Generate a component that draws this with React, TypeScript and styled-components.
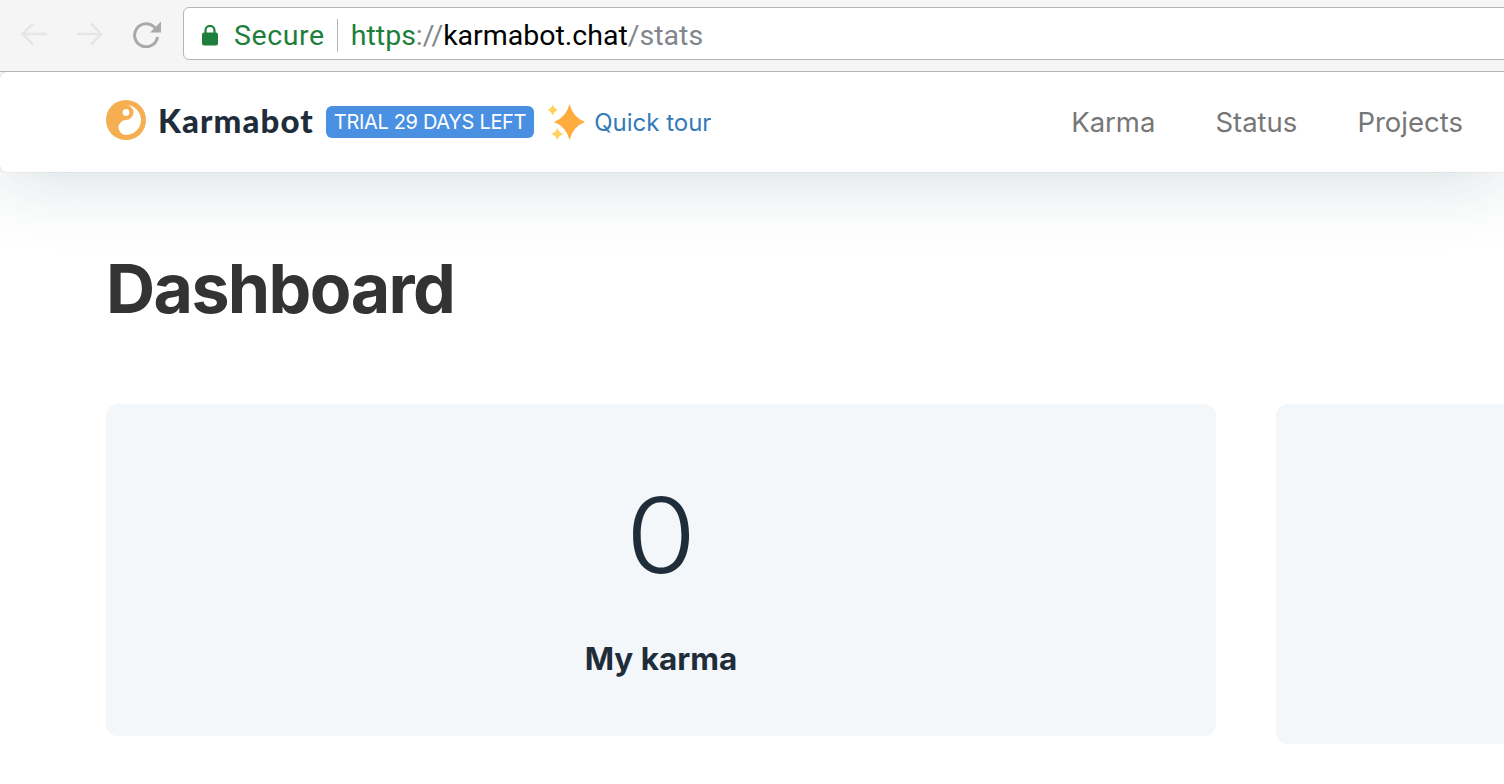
import React from "react"
import styled, { createGlobalStyle } from "styled-components"

const GlobalStyle = createGlobalStyle`
  html, body {
    margin: 0;
    padding: 0;
    background: #fff;
    overflow: hidden;
  }
  body {
    width: 1504px;
    height: 784px;
    font-family: "Inter", "Liberation Sans", sans-serif;
  }
`

const Page = styled.div`
  width: 1504px;
  height: 784px;
  overflow: hidden;
`

const BrowserBar = styled.div`
  height: 71px;
  box-sizing: border-box;
  padding: 7px 0 11px 21px;
  background: #f5f5f5;
  display: flex;
  align-items: center;
  position: relative;
  z-index: 2;
`

const NavArrows = styled.div`
  display: flex;
  align-items: center;
  gap: 30px;
  margin-right: 22px;
`

const AddressBox = styled.div`
  flex: 1;
  height: 100%;
  box-sizing: border-box;
  margin-right: -8px;
  padding: 3px 0 0 18px;
  display: flex;
  align-items: center;
  background: #fff;
  border: 1px solid #b5b5b5;
  border-radius: 6px;
  font-family: "Roboto", sans-serif;
  font-size: 28.5px;
`

const SecureLabel = styled.span`
  margin-left: 16px;
  padding-right: 12px;
  color: #1e7e3c;
  border-right: 1px solid #b5b5b5;
  line-height: 33px;
  letter-spacing: 0.6px;
`

const UrlPart = styled.span<{ $tone: "green" | "gray" | "black" }>`
  color: ${(p) =>
    p.$tone === "green" ? "#1e7e3c" : p.$tone === "gray" ? "#80868b" : "#000"};
`

const Url = styled.div`
  margin-left: 13px;
`

const BrowserEdge = styled.div`
  height: 1px;
  background: #b5b5b5;
  margin-bottom: -1px;
  position: relative;
  z-index: 3;
`

const Navbar = styled.header`
  height: 100px;
  margin-top: 1px;
  box-sizing: border-box;
  padding: 0 41px 0 106px;
  display: flex;
  align-items: center;
  justify-content: space-between;
  position: relative;
  background: #fff;
  border-radius: 6px 0 0 6px;
  box-shadow: 0 0 1px rgba(0, 0, 0, 0.35), 0 12px 70px rgba(30, 60, 80, 0.16);
`

const Brand = styled.div`
  display: flex;
  align-items: center;
`

const Logo = styled.svg`
  margin-bottom: 4px;
`

const BrandName = styled.span`
  margin: 0 0 4px 12px;
  font-family: "Lato", sans-serif;
  font-weight: 900;
  font-size: 33px;
  letter-spacing: 1.1px;
  color: #1f2d3a;
`

const TrialBadge = styled.span`
  margin-left: 12px;
  height: 32px;
  padding: 0 8px;
  display: inline-flex;
  align-items: center;
  background: #4a90e2;
  border-radius: 6px;
  color: #fff;
  font-size: 20px;
  letter-spacing: -0.33px;
  white-space: nowrap;
`

const Sparkle = styled.svg`
  margin-left: 12px;
`

const TourLink = styled.a`
  margin-left: 8px;
  color: #337ab7;
  font-size: 24px;
`

const NavLinks = styled.nav`
  display: flex;
  gap: 60px;
`

const NavLink = styled.a`
  color: #777;
  font-size: 27.5px;
`

const Main = styled.main`
  padding: 0 0 0 106px;
`

const Title = styled.h1`
  margin: 74px 0 0;
  font-weight: 700;
  font-size: 68px;
  line-height: 84px;
  letter-spacing: -1.6px;
  color: #333;
`

const CardRow = styled.div`
  margin-top: 74px;
  display: flex;
  align-items: flex-start;
  gap: 60px;
`

const Card = styled.section<{ $height: number }>`
  flex: 0 0 1110px;
  height: ${(p) => p.$height}px;
  background: #f3f7fa;
  border-radius: 12px;
  display: flex;
  flex-direction: column;
  align-items: center;
`

const Value = styled.div`
  margin-top: 69px;
  font-weight: 300;
  font-size: 104px;
  line-height: 124px;
  color: #1f2d3a;
  transform: scaleX(1.1);
`

const CardLabel = styled.div`
  margin-top: 44px;
  font-weight: 700;
  font-size: 31.5px;
  line-height: 36px;
  color: #1f2d3a;
`

function YinYang() {
  return (
    <Logo width="40" height="40" viewBox="0 0 40 40">
      <circle cx="20" cy="20" r="20" fill="#f5ae50" />
      <path
        d="M20 5A15 15 0 0 1 20 35A7.500 7.500 0 0 1 20 20A7.500 7.500 0 0 0 20 5Z"
        fill="#fff"
      />
      <circle cx="20" cy="12.5" r="3.4" fill="#fff" />
    </Logo>
  )
}

function Sparkles() {
  return (
    <Sparkle width="40" height="40" viewBox="0 0 40 40">
      <path d="M23.500 2Q27 15.500 39 20Q27 24.500 23.500 38Q20 24.500 8 20Q20 15.500 23.500 2Z" fill="#ffac3f" />
      <path d="M6.700 2.400Q8 6.700 12.300 8Q8 9.300 6.700 13.600Q5.400 9.300 1.100 8Q5.400 6.700 6.700 2.400Z" fill="#ffd05a" />
      <path d="M11.300 26Q12.700 30.600 17.300 32Q12.700 33.400 11.300 38Q9.900 33.400 5.300 32Q9.900 30.600 11.300 26Z" fill="#ffd05a" />
    </Sparkle>
  )
}

export default function App() {
  return (
    <Page>
      <GlobalStyle />
      <BrowserBar>
        <NavArrows>
          <svg width="26" height="24" viewBox="0 0 26 24" fill="none" stroke="#e6e6e6" strokeWidth="2.6">
            <path d="M26 12H2M12 1.500 1.500 12 12 22.500" />
          </svg>
          <svg width="26" height="24" viewBox="0 0 26 24" fill="none" stroke="#e6e6e6" strokeWidth="2.6">
            <path d="M0 12h24M14 1.500 24.500 12 14 22.500" />
          </svg>
          <svg width="28" height="28" viewBox="0 0 28 28">
            <path d="M22 8A11.500 11.500 0 1 0 24.500 17" fill="none" stroke="#a9a9a9" strokeWidth="3" />
            <path d="M28 1.500v11H17z" fill="#a9a9a9" />
          </svg>
        </NavArrows>
        <AddressBox>
          <svg width="16" height="21" viewBox="0 0 16 21">
            <path d="M3.500 8V5.500a4.500 4.500 0 0 1 9 0V8" fill="none" stroke="#1e7e3c" strokeWidth="2.200" />
            <rect x="0" y="7.500" width="16" height="13" rx="2" fill="#1e7e3c" />
          </svg>
          <SecureLabel>Secure</SecureLabel>
          <Url>
            <UrlPart $tone="green">https</UrlPart>
            <UrlPart $tone="gray">://</UrlPart>
            <UrlPart $tone="black">karmabot.chat</UrlPart>
            <UrlPart $tone="gray">/stats</UrlPart>
          </Url>
        </AddressBox>
      </BrowserBar>
      <BrowserEdge />
      <Navbar>
        <Brand>
          <YinYang />
          <BrandName>Karmabot</BrandName>
          <TrialBadge>TRIAL 29 DAYS LEFT</TrialBadge>
          <Sparkles />
          <TourLink>Quick tour</TourLink>
        </Brand>
        <NavLinks>
          <NavLink>Karma</NavLink>
          <NavLink>Status</NavLink>
          <NavLink>Projects</NavLink>
        </NavLinks>
      </Navbar>
      <Main>
        <Title>Dashboard</Title>
        <CardRow>
          <Card $height={332}>
            <Value>0</Value>
            <CardLabel>My karma</CardLabel>
          </Card>
          <Card $height={340} />
        </CardRow>
      </Main>
    </Page>
  )
}
